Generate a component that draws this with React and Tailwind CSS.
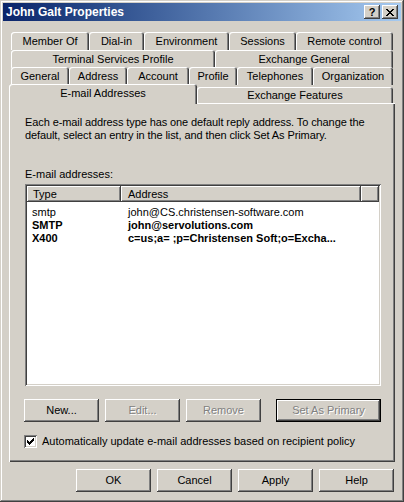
import React from 'react';

const raised =
  'shadow-[inset_-1px_-1px_0_#404040,inset_1px_1px_0_#ffffff,inset_-2px_-2px_0_#808080,inset_2px_2px_0_#d4d0c8]';
const sunken =
  'shadow-[inset_1px_1px_0_#808080,inset_-1px_-1px_0_#ffffff,inset_2px_2px_0_#404040,inset_-2px_-2px_0_#d4d0c8]';
const tabEdge =
  'shadow-[inset_1px_1px_0_#ffffff,inset_-1px_0_0_#404040,inset_-2px_0_0_#808080]';

function Tab({ label, width, height = 'h-[18px]' }) {
  return (
    <div
      className={`${height} ${tabEdge} flex items-center justify-center rounded-t-[3px] pt-[1px] whitespace-nowrap`}
      style={{ width }}
    >
      {label}
    </div>
  );
}

function Button({ children, disabled, primary, className = '' }) {
  return (
    <div className={`${primary ? 'border border-black' : ''} h-[23px] ${className}`}>
      <div
        className={`${raised} h-full w-full flex items-center justify-center ${
          disabled ? 'text-[#808080] [text-shadow:1px_1px_0_#ffffff]' : 'text-black'
        }`}
      >
        {children}
      </div>
    </div>
  );
}

const rows = [
  { type: 'smtp', address: 'john@CS.christensen-software.com', bold: false },
  { type: 'SMTP', address: 'john@servolutions.com', bold: true },
  { type: 'X400', address: 'c=us;a= ;p=Christensen Soft;o=Excha...', bold: true },
];

export default function App() {
  return (
    <div className="w-[404px] h-[502px] bg-[#d4d0c8] p-[3px] shadow-[inset_-1px_-1px_0_#404040,inset_1px_1px_0_#d4d0c8,inset_-2px_-2px_0_#808080,inset_2px_2px_0_#ffffff] font-['Liberation_Sans',Arial,sans-serif] text-[11px] leading-[13px] text-black overflow-hidden">
      {/* title bar */}
      <div className="h-[18px] flex items-center justify-between pl-[3px] pr-[3px] bg-gradient-to-r from-[#0a246a] to-[#a6caf0]">
        <span className="text-white font-bold text-[12px]">John Galt Properties</span>
        <div className="flex gap-[2px]">
          <div className={`${raised} bg-[#d4d0c8] w-[16px] h-[14px] flex items-center justify-center font-bold text-[11px] leading-none`}>
            ?
          </div>
          <div className={`${raised} bg-[#d4d0c8] w-[16px] h-[14px] flex items-center justify-center`}>
            <svg width="8" height="7" viewBox="0 0 8 7" shapeRendering="crispEdges">
              <path d="M0 0h2v1h-2zM6 0h2v1h-2zM1 1h2v1h-2zM5 1h2v1h-2zM2 2h4v1h-4zM3 3h2v1h-2zM2 4h4v1h-4zM1 5h2v1h-2zM5 5h2v1h-2zM0 6h2v1h-2zM6 6h2v1h-2z" fill="#000" />
            </svg>
          </div>
        </div>
      </div>

      <div className="px-[6px] pt-[11px]">
        {/* tab rows */}
        <div className="flex flex-col">
          <div className="flex mx-[2px] h-[18px]">
            <Tab label="Member Of" width={78} />
            <Tab label="Dial-in" width={55} />
            <Tab label="Environment" width={85} />
            <Tab label="Sessions" width={67} />
            <Tab label="Remote control" width={97} />
          </div>
          <div className="flex mx-[2px] h-[17px]">
            <Tab label="Terminal Services Profile" width={204} />
            <Tab label="Exchange General" width={178} />
          </div>
          <div className="flex mx-[2px] h-[17px]">
            <Tab label="General" width={58} />
            <Tab label="Address" width={58} />
            <Tab label="Account" width={62} />
            <Tab label="Profile" width={48} />
            <Tab label="Telephones" width={76} />
            <Tab label="Organization" width={80} />
          </div>
          <div className="flex h-[19px] items-start">
            <div className="relative z-10 bg-[#d4d0c8]">
              <Tab label="E-mail Addresses" width={188} height="h-[20px] pb-[2px]" />
            </div>
            <div className="mt-[3px]">
              <Tab label="Exchange Features" width={196} height="h-[16px]" />
            </div>
          </div>
        </div>

        {/* panel */}
        <div className="h-[359px] shadow-[inset_1px_1px_0_#ffffff,inset_-1px_-1px_0_#404040,inset_-2px_-2px_0_#808080] pl-[16px] pr-[14px] pt-[13px]">
          <p className="tracking-[-0.1px]">
            Each e-mail address type has one default reply address. To change the
            <br />
            default, select an entry in the list, and then click Set As Primary.
          </p>
          <div className="mt-[26px]">E-mail addresses:</div>

          <div className={`${sunken} bg-white mt-[3px] h-[202px] w-[356px] p-[2px]`}>
            <div className="flex h-[16px]">
              <div className={`${raised} bg-[#d4d0c8] w-[94px] pl-[6px] flex items-center`}>Type</div>
              <div className={`${raised} bg-[#d4d0c8] w-[240px] pl-[7px] flex items-center`}>Address</div>
              <div className={`${raised} bg-[#d4d0c8] flex-1`} />
            </div>
            <div className="pt-[4px]">
              {rows.map((r) => (
                <div key={r.type} className={`flex h-[13px] items-center ${r.bold ? 'font-bold' : ''}`}>
                  <div className="w-[94px] pl-[5px]">{r.type}</div>
                  <div className="w-[240px] pl-[7px] whitespace-nowrap">{r.address}</div>
                </div>
              ))}
            </div>
          </div>

          <div className="flex mt-[13px] gap-[6px] -ml-[1px]">
            <Button className="w-[75px]">New...</Button>
            <Button className="w-[75px]" disabled>Edit...</Button>
            <Button className="w-[75px]" disabled>Remove</Button>
            <Button className="w-[105px] ml-auto" disabled primary>Set As Primary</Button>
          </div>

          <div className="flex items-center mt-[13px] gap-[5px] -ml-[1px]">
            <div className={`${sunken} bg-white w-[13px] h-[13px] flex items-center justify-center`}>
              <svg width="7" height="7" viewBox="0 0 7 7" shapeRendering="crispEdges">
                <path d="M6 0h1v3h-1zM5 1h1v3h-1zM4 2h1v3h-1zM3 3h1v3h-1zM2 4h1v3h-1zM1 3h1v3h-1zM0 2h1v3h-1z" fill="#000" />
              </svg>
            </div>
            <span>Automatically update e-mail addresses based on recipient policy</span>
          </div>
        </div>

        {/* dialog buttons */}
        <div className="flex justify-end gap-[6px] mt-[7px] pr-[1px]">
          <Button className="w-[75px]">OK</Button>
          <Button className="w-[75px]">Cancel</Button>
          <Button className="w-[75px]">Apply</Button>
          <Button className="w-[75px]">Help</Button>
        </div>
      </div>
    </div>
  );
}
